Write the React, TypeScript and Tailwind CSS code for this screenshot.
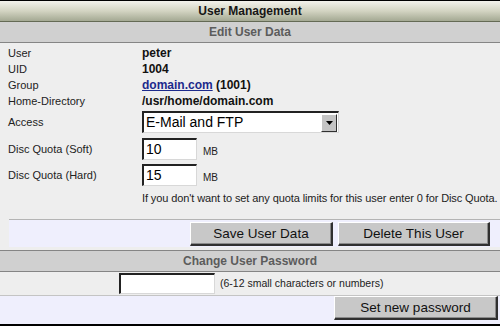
const FONT = "font-['Liberation_Sans',Arial,sans-serif]";
const LABEL = "w-[142px] pl-[8px] text-[11px] text-[#222]";

function InfoRow({ label, children }: { label: string; children: React.ReactNode }) {
  return (
    <div className="flex h-[16px] items-center">
      <div className={LABEL}>{label}</div>
      <div className="text-[12px] font-bold text-[#111]">{children}</div>
    </div>
  );
}

function Btn({ label, width }: { label: string; width: string }) {
  return (
    <button
      className={`${width} h-[24px] bg-[#c8c8c8] border-t border-l border-t-white border-l-white border-r-2 border-b-2 border-r-[#303030] border-b-[#303030] shadow-[inset_-1px_-1px_0_#8a8a8a] text-[13.5px] text-[#111] leading-none`}
    >
      {label}
    </button>
  );
}

function TextBox({ value, width }: { value: string; width: string }) {
  return (
    <div
      className={`${width} h-[22px] bg-white border-t-2 border-l-2 border-t-[#222] border-l-[#222] border-r border-b border-r-[#d8d8d8] border-b-[#d8d8d8] flex items-center pl-[2px] text-[14px] text-black`}
    >
      {value}
    </div>
  );
}

function SectionBar({ title }: { title: string }) {
  return (
    <div className="h-[20px] bg-[#d0d0d0] flex items-center justify-center text-[12px] font-bold text-[#5c5c5c]">
      {title}
    </div>
  );
}

export default function App() {
  return (
    <div className={`w-[500px] h-[326px] bg-[#eeeeee] border-t border-black flex flex-col ${FONT}`}>
      {/* title bar */}
      <div className="h-[21px] bg-gradient-to-b from-[#f3f2ec] via-[#d3d4c2] to-[#a4a993] border-b border-[#646a55] flex items-center justify-center text-[12px] font-bold text-[#161616]">
        User Management
      </div>
      <div className="border-b border-[#858585]">
        <SectionBar title="Edit User Data" />
      </div>

      {/* user data */}
      <div className="pt-[2px]">
        <InfoRow label="User">peter</InfoRow>
        <InfoRow label="UID">1004</InfoRow>
        <InfoRow label="Group">
          <span className="text-[#1c2a8c] underline">domain.com</span> (1001)
        </InfoRow>
        <InfoRow label="Home-Directory">/usr/home/domain.com</InfoRow>

        <div className="flex items-center mt-[2px] h-[22px]">
          <div className={LABEL}>Access</div>
          <div className="w-[197px] h-[22px] bg-white border-t-2 border-l-2 border-t-[#222] border-l-[#222] border-r border-b border-r-[#d8d8d8] border-b-[#d8d8d8] flex items-center justify-between pl-[2px] pr-[1px]">
            <span className="text-[14px] text-black">E-Mail and FTP</span>
            <div className="w-[16px] h-[18px] bg-[#c4c4c4] border-t border-l border-t-white border-l-white border-r border-b border-r-[#303030] border-b-[#303030] flex items-center justify-center">
              <svg width="7" height="4" viewBox="0 0 7 4">
                <path d="M0 0h7L3.5 4z" fill="#000" />
              </svg>
            </div>
          </div>
        </div>

        <div className="flex items-center mt-[5px] h-[22px]">
          <div className={LABEL}>Disc Quota (Soft)</div>
          <TextBox value="10" width="w-[55px]" />
          <span className="ml-[6px] mt-[4px] text-[10px] text-[#222]">MB</span>
        </div>
        <div className="flex items-center mt-[4px] h-[22px]">
          <div className={LABEL}>Disc Quota (Hard)</div>
          <TextBox value="15" width="w-[55px]" />
          <span className="ml-[6px] mt-[4px] text-[10px] text-[#222]">MB</span>
        </div>
        <div className="mt-[5px] pl-[142px] h-[14px] flex items-center text-[11px] text-[#222] tracking-[-0.1px] whitespace-nowrap">
          If you don't want to set any quota limits for this user enter 0 for Disc Quota.
        </div>
      </div>

      {/* action box */}
      <div className="mt-[14px] ml-[9px] border-t border-[#b4b4b4] bg-[#efeffd] h-[28px] flex items-start justify-end gap-[5px] pt-[2px] pr-[10px]">
        <Btn label="Save User Data" width="w-[143px]" />
        <Btn label="Delete This User" width="w-[152px]" />
      </div>

      <div className="mt-[3px] border-t border-b border-[#858585]">
        <SectionBar title="Change User Password" />
      </div>

      <div className="h-[24px] flex items-center border-b border-[#c4c4c4]">
        <div className="ml-[119px] w-[96px] h-[21px] bg-white border-t-2 border-l-2 border-t-[#222] border-l-[#222] border-r border-b border-r-[#d8d8d8] border-b-[#d8d8d8]" />
        <span className="ml-[5px] text-[10.5px] text-[#222]">(6-12 small characters or numbers)</span>
      </div>

      <div className="flex-1 bg-[#efeffd] border-b-2 border-black flex justify-end pr-[2px]">
        <Btn label="Set new password" width="w-[164px]" />
      </div>
    </div>
  );
}
